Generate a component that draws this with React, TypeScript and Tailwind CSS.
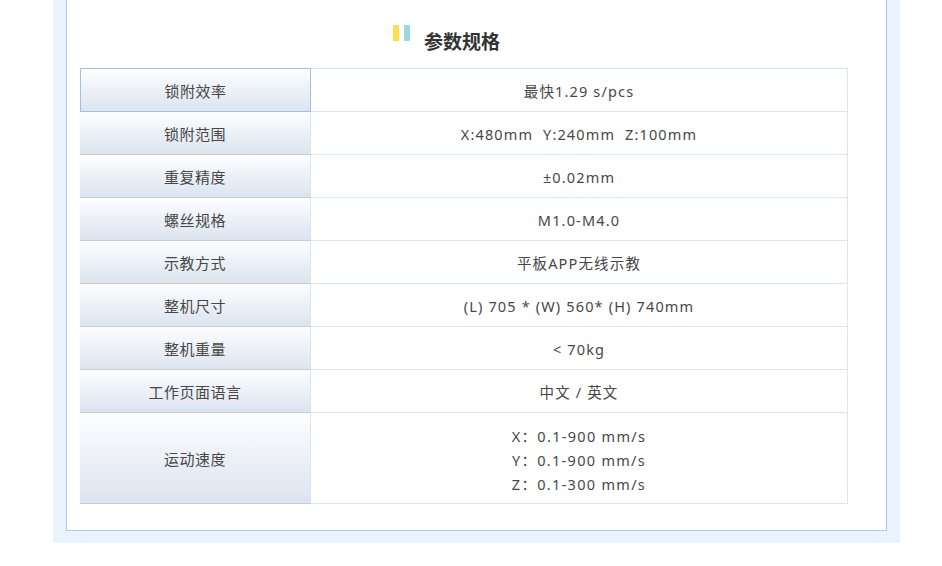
import React from "react";

const rows: { label: string; value: React.ReactNode; tall?: boolean }[] = [
  { label: "锁附效率", value: "最快1.29 s/pcs" },
  { label: "锁附范围", value: "X:480mm\u00a0\u00a0Y:240mm\u00a0\u00a0Z:100mm" },
  { label: "重复精度", value: "±0.02mm" },
  { label: "螺丝规格", value: "M1.0-M4.0" },
  { label: "示教方式", value: "平板APP无线示教" },
  { label: "整机尺寸", value: "(L) 705 * (W) 560* (H) 740mm" },
  { label: "整机重量", value: "< 70kg" },
  { label: "工作页面语言", value: "中文 / 英文" },
  {
    label: "运动速度",
    tall: true,
    value: (
      <div className="flex flex-col items-center leading-[24px] tracking-[1.3px]">
        <span>X：0.1-900 mm/s</span>
        <span>Y：0.1-900 mm/s</span>
        <span>Z：0.1-300 mm/s</span>
      </div>
    ),
  },
];

export default function App() {
  return (
    <div
      className="w-[942px] h-[566px] bg-white text-[#474747]"
      style={{ fontFamily: '"Noto Sans", "Noto Sans CJK SC", sans-serif' }}
    >
      <div className="ml-[53px] w-[847px] h-[543px] bg-[#eaf3fd] px-[13px] pb-[12px]">
        <div className="h-full bg-white border border-t-0 border-[#a8cdee]">
          <div className="flex items-center h-[68px] pl-[326px]">
            <div className="flex gap-[5px] mt-[-2px]">
              <span className="block w-[6px] h-[16px] bg-[#ffe04a]" />
              <span className="block w-[6px] h-[16px] bg-[#9ed8dc]" />
            </div>
            <span
              className="ml-[14px] text-[19px] font-bold text-[#333] mt-[14px]"
              style={{ fontFamily: '"Noto Sans CJK SC", sans-serif' }}
            >
              参数规格
            </span>
          </div>
          <div className="ml-[13px] w-[768px] border-t border-r border-[#dae5f3]">
            {rows.map((r, i) => (
              <div
                key={i}
                className={`flex ${r.tall ? "h-[91px]" : "h-[43px]"}`}
              >
                <div
                  className={`w-[231px] flex items-center justify-center text-[15px] tracking-[0.5px] pt-[3px] bg-gradient-to-b from-[#fdfeff] to-[#dbe4ef] border-r ${
                    i === 0
                      ? "border border-[#a5bfe3] -mt-px"
                      : "border-b border-b-[#cccccc] border-r-[#dae5f3]"
                  }`}
                >
                  {r.label}
                </div>
                <div
                  className={`flex-1 flex items-center justify-center text-[14.5px] tracking-[1.15px] border-b border-[#dae5f3] ${
                    r.tall ? "pt-[3px]" : "pt-[3px]"
                  }`}
                >
                  {r.value}
                </div>
              </div>
            ))}
          </div>
        </div>
      </div>
    </div>
  );
}
